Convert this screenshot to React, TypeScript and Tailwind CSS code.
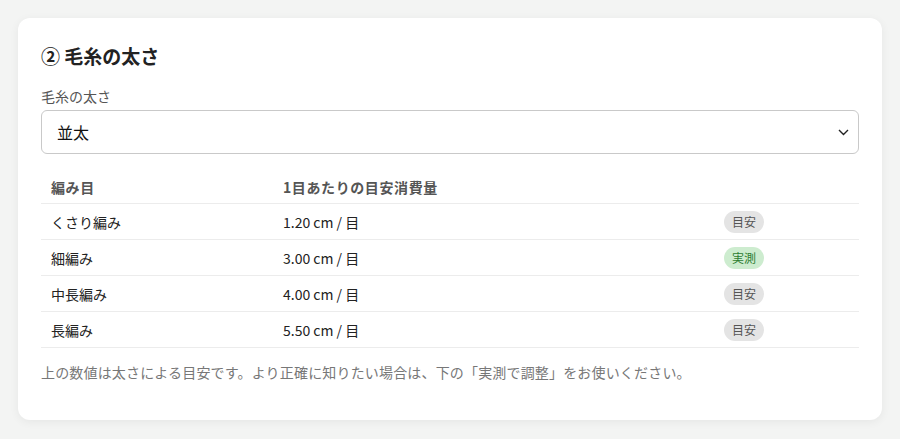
import React from "react";

const rows = [
  { name: "くさり編み", value: "1.20 cm / 目", measured: false },
  { name: "細編み", value: "3.00 cm / 目", measured: true },
  { name: "中長編み", value: "4.00 cm / 目", measured: false },
  { name: "長編み", value: "5.50 cm / 目", measured: false },
];

const Badge = ({ measured }: { measured: boolean }) =>
  measured ? (
    <span className="inline-flex h-[22px] items-center rounded-full bg-[#cdeccf] px-2 text-xs text-[#2e7d32]">
      実測
    </span>
  ) : (
    <span className="inline-flex h-[22px] items-center rounded-full bg-[#e4e4e4] px-2 text-xs text-[#555]">
      目安
    </span>
  );

const App = () => {
  return (
    <div
      className="min-h-screen bg-[#f3f4f3] pt-[18px] pb-6"
      style={{ fontFamily: '"Noto Sans CJK JP", "Noto Sans", sans-serif' }}
    >
      <section className="mx-[18px] rounded-xl bg-white px-[23px] pt-6 pb-[38px] shadow-[0_2px_10px_rgba(0,0,0,0.06)]">
        {/* Title */}
        <h2 className="mb-4 text-[19px] leading-7 font-bold text-[#222]">② 毛糸の太さ</h2>

        {/* Yarn weight select */}
        <label className="mb-1 block text-sm leading-5 text-[#555]">毛糸の太さ</label>
        <div className="flex h-11 items-center justify-between rounded-md border border-[#c9c9c9] bg-white pr-[9px] pl-[15px]">
          <span className="text-base text-[#111]">並太</span>
          <svg width="11" height="7" viewBox="0 0 11 7" fill="none">
            <path d="M1 1l4.5 4.5L10 1" stroke="#222" strokeWidth="1.4" />
          </svg>
        </div>

        {/* Stitch table */}
        <div className="mt-4 text-sm">
          <div className="grid h-[34px] grid-cols-[232px_441px_1fr] items-center border-b border-[#ececec] font-bold tracking-[0.6px] text-[#555]">
            <div className="px-2.5">編み目</div>
            <div className="px-2.5">1目あたりの目安消費量</div>
            <div />
          </div>
          {rows.map((r) => (
            <div
              key={r.name}
              className="grid h-9 grid-cols-[232px_441px_1fr] items-center border-b border-[#ececec] text-[#222]"
            >
              <div className="px-2.5">{r.name}</div>
              <div className="px-2.5">{r.value}</div>
              <div className="px-2.5">
                <Badge measured={r.measured} />
              </div>
            </div>
          ))}
        </div>

        {/* Note */}
        <p className="mt-[14px] text-sm leading-5 tracking-[0.17px] text-[#777]">
          上の数値は太さによる目安です。より正確に知りたい場合は、下の「実測で調整」をお使いください。
        </p>
      </section>
    </div>
  );
};

export default App;
